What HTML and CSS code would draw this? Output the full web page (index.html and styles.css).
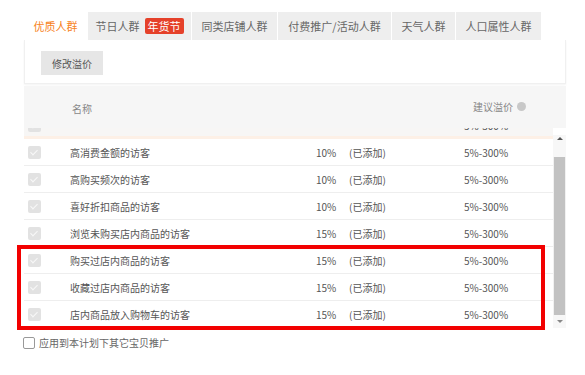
FILE: index.html
```html
<!DOCTYPE html>
<html lang="zh">
<head>
<meta charset="utf-8">
<link rel="stylesheet" href="styles.css">
</head>
<body>
<div class="page">
  <div class="tabs">
    <div class="tab active w1">优质人群</div>
    <div class="tab w2">节日人群 <span class="badge">年货节</span></div>
    <div class="tab w3">同类店铺人群</div>
    <div class="tab w4">付费推广/活动人群</div>
    <div class="tab w5">天气人群</div>
    <div class="tab w6">人口属性人群</div>
  </div>
  <div class="panel">
    <button class="btn">修改溢价</button>
  </div>
  <div class="thead">
    <span class="th-name">名称</span>
    <span class="th-price">建议溢价 <i class="qicon"></i></span>
  </div>
  <div class="scroll">
    <div class="list">
      <div class="row partial">
        <div class="row-inner">
          <span class="cb"></span><span class="name"></span><span></span><span></span><span class="range">5%-300%</span>
        </div>
      </div>
      <div class="row"><span class="cb"></span><span class="name">高消费金额的访客</span><span class="pct">10%</span><span class="added">(已添加)</span><span class="range">5%-300%</span></div>
      <div class="row"><span class="cb"></span><span class="name">高购买频次的访客</span><span class="pct">10%</span><span class="added">(已添加)</span><span class="range">5%-300%</span></div>
      <div class="row"><span class="cb"></span><span class="name">喜好折扣商品的访客</span><span class="pct">10%</span><span class="added">(已添加)</span><span class="range">5%-300%</span></div>
      <div class="row"><span class="cb"></span><span class="name">浏览未购买店内商品的访客</span><span class="pct">15%</span><span class="added">(已添加)</span><span class="range">5%-300%</span></div>
      <div class="row"><span class="cb"></span><span class="name">购买过店内商品的访客</span><span class="pct">15%</span><span class="added">(已添加)</span><span class="range">5%-300%</span></div>
      <div class="row"><span class="cb"></span><span class="name">收藏过店内商品的访客</span><span class="pct">15%</span><span class="added">(已添加)</span><span class="range">5%-300%</span></div>
      <div class="row last"><span class="cb"></span><span class="name">店内商品放入购物车的访客</span><span class="pct">15%</span><span class="added">(已添加)</span><span class="range">5%-300%</span></div>
    </div>
    <div class="scrollbar">
      <div class="sb-up"><i class="tri-up"></i></div>
      <div class="sb-thumb"></div>
      <div class="sb-down"><i class="tri-down"></i></div>
    </div>
  </div>
  <label class="apply"><span class="box"></span>应用到本计划下其它宝贝推广</label>
  <div class="highlight"></div>
</div>
</body>
</html>
```

FILE: styles.css
```css
* { box-sizing: border-box; }
html, body { margin: 0; padding: 0; background: #fff; }
body {
  font-family: "Noto Sans CJK SC", "Liberation Sans", sans-serif;
  font-size: 10px;
  color: #555;
}
.page {
  position: relative;
  width: 585px;
  height: 375px;
  padding: 12px 0 0 24px;
}
.tabs {
  display: flex;
  gap: 1px;
  height: 28px;
}
.tab {
  display: flex;
  align-items: center;
  justify-content: center;
  background: #eeeeee;
  color: #666;
  font-size: 11px;
  white-space: nowrap;
}
.tab.active { background: #fff; color: #f7821b; }
.w1 { width: 63px; }
.w2 { width: 103px; }
.w3 { width: 85px; }
.w4 { width: 113px; }
.w5 { width: 63px; }
.w6 { width: 85px; }
.badge {
  display: inline-block;
  margin-left: 5px;
  padding: 0 3px;
  height: 16px;
  line-height: 16px;
  background: #e5412a;
  color: #fff;
  border-radius: 2px;
  font-size: 11px;
}
.panel {
  width: 542px;
  height: 44px;
  padding: 12px 16px;
  border: 1px solid #f0f0f0;
  border-top: none;
  box-shadow: 0 1px 2px rgba(0,0,0,0.05);
}
.btn {
  width: 62px;
  height: 24px;
  border: none;
  background: #e6e6e6;
  color: #555;
  font: inherit;
  font-size: 10px;
  padding: 0;
  margin-top: -1px;
}
.thead {
  margin-top: 2px;
  width: 542px;
  height: 42px;
  background: #f6f6f6;
  display: flex;
  align-items: center;
  justify-content: space-between;
  padding: 2px 40px 0 48px;
  color: #888;
}
.th-price { display: flex; align-items: center; gap: 4px; margin-top: -4px; }
.qicon {
  width: 9px; height: 9px; border-radius: 50%;
  background: #c8c8c8; display: inline-block;
}
.scroll {
  display: flex;
  width: 542px;
  height: 202px;
}
.list { width: 529px; }
.row {
  display: grid;
  grid-template-columns: 42px 246px 33px 115px auto;
  align-items: center;
  height: 27px;
  padding-left: 4px;
  border-bottom: 1px solid #eeeeee;
  white-space: nowrap;
}
.row.last { border-bottom: none; }
.row.partial {
  display: block;
  height: 11px;
  overflow: hidden;
  background: #f7f6f5;
  border-bottom: 3px solid #fdf0e6;
  padding-left: 0;
}
.row-inner {
  display: grid;
  grid-template-columns: 42px 246px 33px 115px auto;
  align-items: center;
  height: 27px;
  padding-left: 4px;
  margin-top: -16px;
}
.cb {
  width: 13px; height: 13px;
  background: #e2e2e2;
  border-radius: 2px;
  position: relative;
}
.cb::after {
  content: "";
  position: absolute;
  left: 4px; top: 2px;
  width: 3px; height: 6px;
  border: solid #f8f8f8;
  border-width: 0 1.5px 1.5px 0;
  transform: rotate(45deg);
}
.name { color: #555; }
.pct, .added, .range { color: #555; }
.scrollbar {
  width: 13px;
  margin-top: 7px;
  height: 193px;
  display: flex;
  flex-direction: column;
  background: #f1f1f1;
}
.sb-up { height: 22px; background: #f7f7f7; display: flex; justify-content: center; padding-top: 2px; }
.sb-thumb { flex: 1; background: #c2c2c2; margin: 0 1px; }
.sb-down { height: 13px; background: #f7f7f7; display: flex; justify-content: center; align-items: center; }
.tri-up {
  width: 0; height: 0;
  border-left: 3px solid transparent;
  border-right: 3px solid transparent;
  border-bottom: 3px solid #555;
}
.tri-down {
  width: 0; height: 0;
  border-left: 3px solid transparent;
  border-right: 3px solid transparent;
  border-top: 3px solid #888;
}
.apply {
  display: flex;
  align-items: center;
  gap: 4px;
  margin-top: 5px;
  margin-left: -1px;
  color: #666;
  font-size: 10px;
}
.box {
  width: 12px; height: 12px;
  border: 1px solid #999;
  border-radius: 2px;
  background: #fff;
}
.highlight {
  position: absolute;
  left: 17px;
  top: 245px;
  width: 528px;
  height: 85px;
  border: 4px solid #f20000;
  pointer-events: none;
}
```
